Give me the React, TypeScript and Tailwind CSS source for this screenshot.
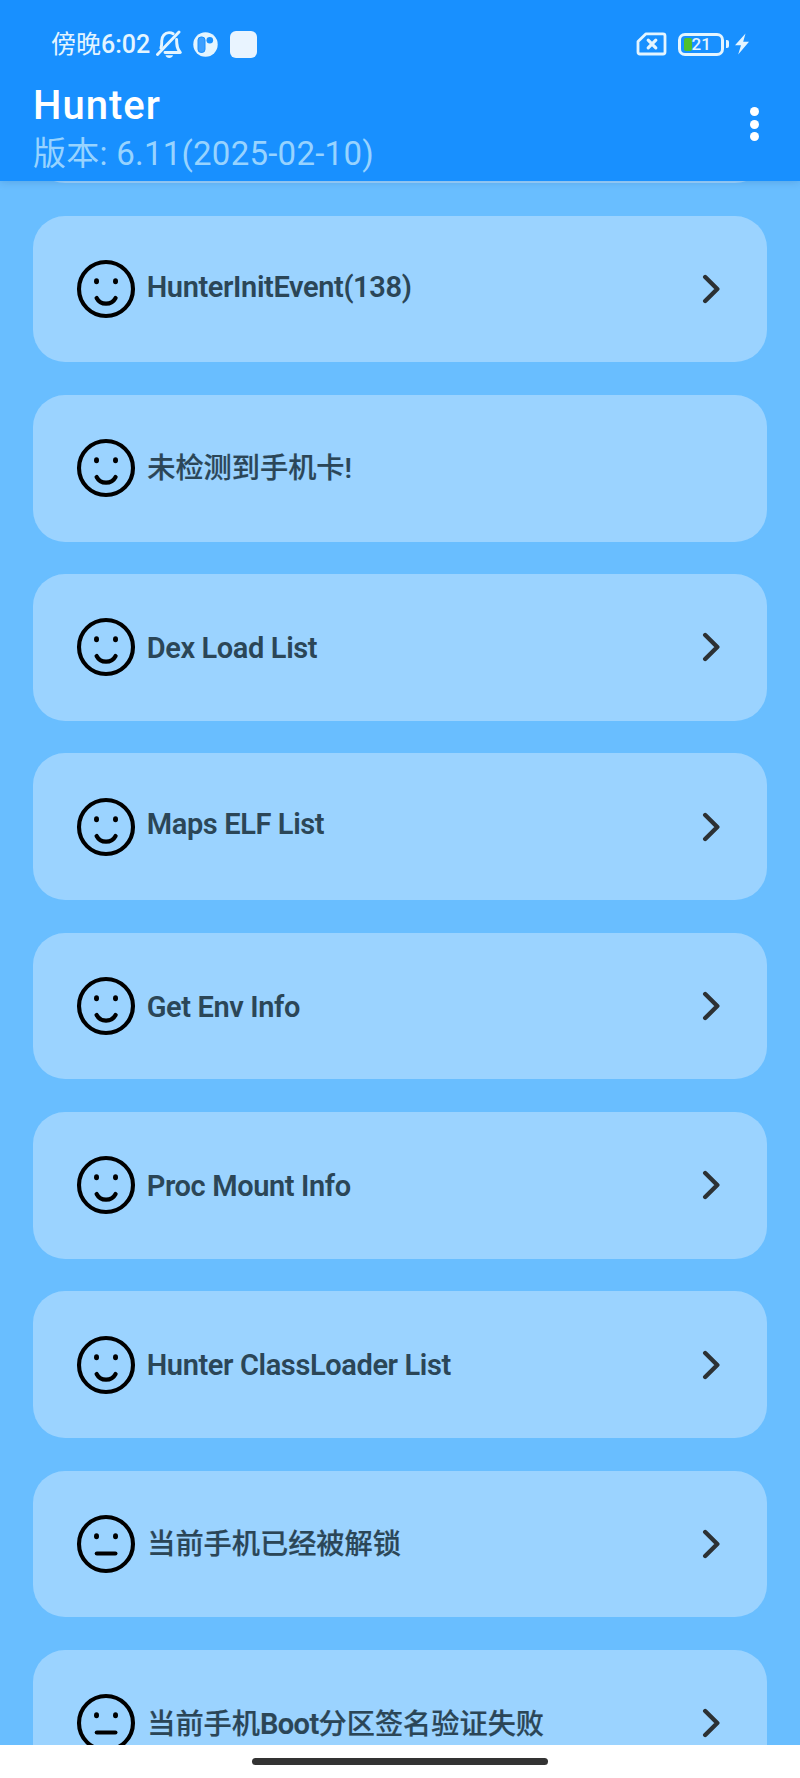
import type { ReactNode } from 'react';

type Mood = 'smile' | 'neutral';

interface CheckItem {
  id: string;
  title: ReactNode;
  mood: Mood;
  arrow: boolean;
  titleClass: string;
}

const LATIN = 'text-[29px] font-semibold tracking-[-0.38px]';
const CJK = 'text-[28.2px] font-medium [-webkit-text-stroke:0.2px] pt-px pl-[0.5px]';

const items: CheckItem[] = [
  { id: 'init', title: 'HunterInitEvent(138)', mood: 'smile', arrow: true, titleClass: `${LATIN} pb-[5px]` },
  { id: 'sim', title: '未检测到手机卡!', mood: 'smile', arrow: false, titleClass: CJK },
  { id: 'dex', title: 'Dex Load List', mood: 'smile', arrow: true, titleClass: LATIN },
  { id: 'maps', title: 'Maps ELF List', mood: 'smile', arrow: true, titleClass: `${LATIN} pb-[6px]` },
  { id: 'env', title: 'Get Env Info', mood: 'smile', arrow: true, titleClass: LATIN },
  { id: 'mount', title: 'Proc Mount Info', mood: 'smile', arrow: true, titleClass: LATIN },
  { id: 'loader', title: 'Hunter ClassLoader List', mood: 'smile', arrow: true, titleClass: LATIN },
  { id: 'unlock', title: '当前手机已经被解锁', mood: 'neutral', arrow: true, titleClass: CJK },
  {
    id: 'boot',
    title: (
      <>
        当前手机<span className="text-[29px] font-semibold tracking-[-0.6px]">Boot</span>分区签名验证失败
      </>
    ),
    mood: 'neutral',
    arrow: true,
    titleClass: CJK,
  },
];

const FaceIcon = ({ mood }: { mood: Mood }) => (
  <svg className="h-[60px] w-[60px] shrink-0" viewBox="0 0 60 60" fill="none" stroke="#000" strokeLinecap="round">
    <circle cx="30" cy="30" r="27" strokeWidth="4.1" />
    <ellipse cx="20.5" cy="22.3" rx="2.5" ry="3" fill="#000" stroke="none" />
    <ellipse cx="39.5" cy="22.3" rx="2.5" ry="3" fill="#000" stroke="none" />
    {mood === 'smile' ? (
      <path d="M20.6 39C24.5 46.6 35.5 46.6 39.6 39" strokeWidth="4.2" />
    ) : (
      <path d="M20.8 39.5H39.4" strokeWidth="4.2" />
    )}
  </svg>
);

const ChevronIcon = () => (
  <svg className="h-[30px] w-5 shrink-0" viewBox="0 0 20 30" fill="none">
    <path d="M4.2 3L16.3 15L4.2 27" stroke="#2c3134" strokeWidth="4.4" strokeLinecap="round" strokeLinejoin="round" />
  </svg>
);

const StatusBar = () => (
  <div className="flex h-[88px] items-center justify-between pr-[50px] pl-[51px] text-[#e4f5ff]">
    <div className="flex items-center">
      <span className="text-[25px] leading-none whitespace-nowrap">
        傍晚<span className="font-medium">6:02</span>
      </span>
      <svg className="ml-[6px] h-7 w-[26px]" viewBox="0 0 26 28" fill="none" stroke="currentColor" strokeWidth="2.9" strokeLinecap="round" strokeLinejoin="round">
        <path d="M1.5 24.5L23 2" />
        <path d="M4.9 18C5.9 16 5.7 14 5.7 11C5.7 6 9 2.6 13 2.6C14.6 2.6 16 3 17.2 3.8" />
        <path d="M20.6 9.5C20.6 15 20.8 18.5 24.3 22.5H9" />
        <path d="M9.5 25.3H17C16.5 27 15 28 13.2 28C11.5 28 10 27 9.5 25.3Z" fill="currentColor" stroke="none" />
      </svg>
      <svg className="ml-[11px] h-[25px] w-[25px]" viewBox="0 0 25 25">
        <circle cx="12.5" cy="12.5" r="12.2" fill="currentColor" />
        <rect x="5" y="5" width="7" height="15.4" rx="3" fill="#3c9fff" stroke="#1890ff" strokeWidth="1" />
        <circle cx="16.8" cy="8.2" r="3.3" fill="#1890ff" />
      </svg>
      <span className="ml-[12px] h-[27px] w-[27px] rounded-[6px] bg-[#e9f4ff]" />
    </div>
    <div className="flex items-center">
      <svg className="h-6 w-[31px]" viewBox="0 0 31 24" fill="none" stroke="currentColor" strokeWidth="2.8" strokeLinejoin="round" strokeLinecap="round">
        <path d="M10 1.8H27C28.4 1.8 29 2.4 29 3.8V20C29 21.4 28.4 22 27 22H4C2.6 22 2 21.4 2 20V9.5Z" />
        <path d="M12.2 8.2L19.8 15.8M19.8 8.2L12.2 15.8" strokeWidth="3.2" />
      </svg>
      <div className="ml-[11px] flex h-[23px] w-[46px] items-center rounded-[7px] border-[3px] border-current pl-[2.5px]">
        <span className="h-[13px] w-2 shrink-0 rounded-[2px] bg-[#4fc02c]" />
        <span className="text-[17px] leading-none font-medium">21</span>
      </div>
      <span className="ml-[2px] h-2 w-[3px] rounded-r-[2px] bg-current" />
      <svg className="ml-[5px] h-[22px] w-4" viewBox="0 0 16 22">
        <path d="M11.5 0.5L1 12.2H7L4.2 21.5L15 8.8H9.2Z" fill="currentColor" />
      </svg>
    </div>
  </div>
);

const Header = () => (
  <header className="relative z-10 h-[181px] shrink-0 bg-[#1890ff] shadow-[0_1px_8px_rgba(0,40,90,0.16)]">
    <StatusBar />
    <div className="flex justify-between pr-[41px] pl-[33px]">
      <div>
        <h1 className="h-[36px] text-[40px] leading-[36px] font-medium tracking-[1px] text-white">Hunter</h1>
        <p className="mt-[12px] h-[36px] text-[33px] leading-[36px] tracking-[0.25px] whitespace-nowrap text-[#97d3ff]">
          版本: 6.11(2025-02-10)
        </p>
      </div>
      <div className="flex flex-col gap-[3.7px] pt-[19px]">
        <span className="h-[9px] w-[9px] rounded-full bg-white" />
        <span className="h-[9px] w-[9px] rounded-full bg-white" />
        <span className="h-[9px] w-[9px] rounded-full bg-white" />
      </div>
    </div>
  </header>
);

const CheckCard = ({ item }: { item: CheckItem }) => (
  <li className="flex h-[146.8px] shrink-0 items-center rounded-[32px] bg-[#9bd3ff] pr-[46px] pl-[43px]">
    <FaceIcon mood={item.mood} />
    <span className={`mt-px ml-[11px] flex-1 leading-[34px] whitespace-nowrap text-[#2b4657] ${item.titleClass}`}>
      {item.title}
    </span>
    {item.arrow && <ChevronIcon />}
  </li>
);

export default function App() {
  return (
    <div className="flex h-[1778px] w-[800px] flex-col overflow-hidden bg-white font-[Roboto,'Noto_Sans_CJK_SC',sans-serif]">
      <Header />
      <main className="h-[1564px] shrink-0 overflow-hidden bg-[#69beff] px-[32.7px]">
        {/* the list is scrolled: the first card only shows its bottom edge */}
        <ul className="-mt-[144.8px] flex flex-col gap-[32.5px]">
          <li className="h-[146.8px] shrink-0 rounded-[32px] bg-[#9bd3ff]" />
          {items.map((item) => (
            <CheckCard key={item.id} item={item} />
          ))}
        </ul>
      </main>
      <footer className="flex flex-1 justify-center pt-[13px]">
        <span className="h-[7px] w-[296px] rounded-full bg-[#333]" />
      </footer>
    </div>
  );
}
